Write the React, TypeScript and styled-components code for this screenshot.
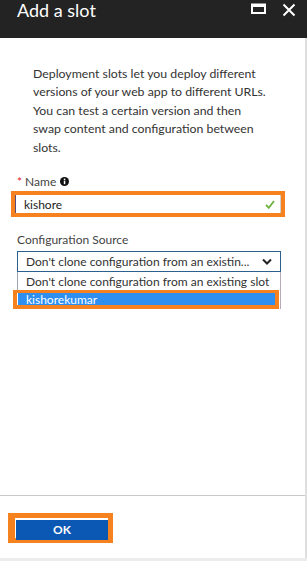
import styled, { createGlobalStyle } from "styled-components";

const GlobalStyle = createGlobalStyle`
    html, body {
        margin: 0;
        padding: 0;
        background: #ffffff;
    }
    * {
        box-sizing: border-box;
    }
`;

const Blade = styled.div`
    width: 307px;
    height: 561px;
    display: flex;
    flex-direction: column;
    background: #ffffff;
    font-family: "Segoe UI", Lato, "Open Sans", sans-serif;
    color: #333333;
    overflow: hidden;
`;

const Header = styled.header`
    height: 38px;
    flex-shrink: 0;
    background: #232323;
    display: flex;
    justify-content: space-between;
    align-items: flex-start;
    padding: 1px 11px 0 17px;
    h1 {
        margin: 0;
        font-size: 18px;
        font-weight: 400;
        line-height: 18px;
        color: #ffffff;
    }
    .actions {
        display: flex;
        gap: 16px;
        padding-top: 2px;
    }
`;

const Main = styled.div`
    flex: 1;
    display: flex;
    flex-direction: column;
    border-right: 2px solid #dfdfdf;
`;

const Content = styled.section`
    flex: 1;
    padding: 27px 20px 0 17px;
    .intro {
        margin: 0 0 16px 16px;
        width: 236px;
        font-size: 12.3px;
        line-height: 18.4px;
        color: #333333;
    }
`;

const FieldLabel = styled.label`
    display: flex;
    align-items: center;
    gap: 4px;
    height: 16px;
    font-size: 12px;
    color: #444444;
    .req {
        color: #e01b1b;
        font-size: 12px;
        margin-right: 3px;
    }
`;

const Highlight = styled.div<{ $inset?: number }>`
    border: 4px solid #f5821f;
    margin-left: ${(p) => -(p.$inset ?? 6)}px;
`;

const NameBox = styled.div`
    display: flex;
    align-items: center;
    justify-content: space-between;
    height: 18px;
    background: #ffffff;
    border-left: 1px solid #5a4a7a;
    border-right: 1px solid #d0d0d0;
    padding: 0 5px 0 8px;
    font-size: 12px;
    color: #222222;
`;

const ConfigBlock = styled.div`
    margin-top: 14px;
    margin-right: 4px;
`;

const Select = styled.div`
    margin-top: 4px;
    height: 21px;
    display: flex;
    align-items: center;
    justify-content: space-between;
    border: 1px solid #2d5f8f;
    padding: 0 8px 0 8px;
    font-size: 12px;
    color: #333333;
`;

const Options = styled.ul`
    list-style: none;
    margin: 0;
    padding: 0;
    border-left: 1px solid #9aa4b4;
    border-right: 1px solid #b8aab8;
    font-size: 12px;
`;

const Option = styled.li<{ $selected?: boolean }>`
    height: ${(p) => (p.$selected ? "12px" : "18px")};
    display: flex;
    align-items: center;
    padding-left: 8px;
    background: ${(p) => (p.$selected ? "#2f8ff0" : "#ffffff")};
    color: ${(p) => (p.$selected ? "#ffffff" : "#333333")};
`;

const SelectedFrame = styled.div`
    border: 4px solid #f5821f;
    border-top-width: 3px;
    margin-left: -5px;
    margin-right: 1px;
    background: #ffffff;
    padding-left: 1px;
`;

const Footer = styled.footer`
    height: 63px;
    flex-shrink: 0;
    border-top: 1px solid #c9c9c9;
    padding: 17px 0 0 8px;
`;

const OkFrame = styled.div`
    width: 105px;
    height: 30px;
    border: 5px solid #f5821f;
    border-left-width: 7px;
    background: #ffffff;
    padding-left: 1px;
`;

const OkButton = styled.button`
    width: 100%;
    height: 100%;
    border: none;
    background: #0b57b4;
    color: #ffffff;
    font-family: "Segoe UI", Lato, "Open Sans", sans-serif;
    font-weight: 700;
    font-size: 12px;
    padding: 0;
    cursor: pointer;
`;

const BottomStrip = styled.div`
    height: 3px;
    flex-shrink: 0;
    background: #ececec;
`;

function App() {
    return (
        <>
            <GlobalStyle />
            <Blade>
                <Header>
                    <h1>Add a slot</h1>
                    <div className="actions">
                        <svg width="15" height="11" viewBox="0 0 15 11">
                            <rect x="1" y="1.5" width="13" height="8.5" fill="none" stroke="#fff" strokeWidth="2" />
                            <rect x="1" y="1" width="13" height="3" fill="#fff" />
                        </svg>
                        <svg width="14" height="14" viewBox="0 0 14 14">
                            <path d="M1.5 1.5 L12.5 12.5 M12.5 1.5 L1.5 12.5" stroke="#fff" strokeWidth="2" />
                        </svg>
                    </div>
                </Header>
                <Main>
                    <Content>
                        <p className="intro">
                            Deployment slots let you deploy different versions of your web app to
                            different URLs. You can test a certain version and then swap content and
                            configuration between slots.
                        </p>
                        <FieldLabel>
                            <span>
                                <span className="req">*</span>Name
                            </span>
                            <svg width="9" height="9" viewBox="0 0 9 9">
                                <circle cx="4.5" cy="4.5" r="4.5" fill="#111" />
                                <rect x="3.8" y="3.6" width="1.5" height="3.6" fill="#fff" />
                                <rect x="3.8" y="1.6" width="1.5" height="1.4" fill="#fff" />
                            </svg>
                        </FieldLabel>
                        <Highlight style={{ marginTop: 2 }}>
                            <NameBox>
                                <span>kishore</span>
                                <svg width="10" height="9" viewBox="0 0 10 9">
                                    <path d="M1 5 L3.8 7.8 L9 1" fill="none" stroke="#6db33f" strokeWidth="1.8" />
                                </svg>
                            </NameBox>
                        </Highlight>
                        <ConfigBlock>
                            <FieldLabel>Configuration Source</FieldLabel>
                            <Select>
                                <span>Don't clone configuration from an existin...</span>
                                <svg width="10" height="7" viewBox="0 0 10 7">
                                    <path d="M1 1.5 L5 5.5 L9 1.5" fill="none" stroke="#222" strokeWidth="2" />
                                </svg>
                            </Select>
                            <Options>
                                <Option>Don't clone configuration from an existing slot</Option>
                                <SelectedFrame>
                                    <Option $selected>kishorekumar</Option>
                                </SelectedFrame>
                            </Options>
                        </ConfigBlock>
                    </Content>
                    <Footer>
                        <OkFrame>
                            <OkButton>OK</OkButton>
                        </OkFrame>
                    </Footer>
                </Main>
                <BottomStrip />
            </Blade>
        </>
    );
}

export default App;
